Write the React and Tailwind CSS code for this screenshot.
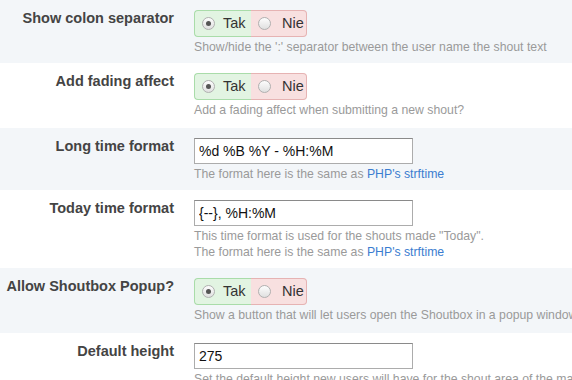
import React from 'react';

const rows = [
  {
    label: 'Show colon separator',
    type: 'toggle',
    help: ["Show/hide the ':' separator between the user name the shout text"],
  },
  {
    label: 'Add fading affect',
    type: 'toggle',
    help: ['Add a fading affect when submitting a new shout?'],
  },
  {
    label: 'Long time format',
    type: 'input',
    value: '%d %B %Y - %H:%M',
    help: [['The format here is the same as ', "PHP's strftime"]],
  },
  {
    label: 'Today time format',
    type: 'input',
    value: '{--}, %H:%M',
    help: ['This time format is used for the shouts made "Today".', ['The format here is the same as ', "PHP's strftime"]],
  },
  {
    label: 'Allow Shoutbox Popup?',
    type: 'toggle',
    help: ['Show a button that will let users open the Shoutbox in a popup window'],
  },
  {
    label: 'Default height',
    type: 'input',
    value: '275',
    help: ['Set the default height new users will have for the shout area of the main shoutbox'],
  },
];

function Radio({ checked }) {
  return (
    <span className="relative inline-flex h-[13px] w-[13px] shrink-0 items-center justify-center rounded-full border border-[#b0b0b0] bg-gradient-to-b from-[#fdfdfd] to-[#e0e0e0]">
      {checked && <span className="h-[5px] w-[5px] rounded-full bg-[#555]" />}
    </span>
  );
}

function Toggle() {
  return (
    <div className="flex h-[27px] w-[113px] text-[14.5px] text-[#333]">
      <label className="flex w-[57px] items-center rounded-l-[4px] border border-r-0 border-[#a9dca9] bg-[#e2f4e2] pl-[7px]">
        <Radio checked />
        <span className="ml-[8px]">Tak</span>
      </label>
      <label className="flex w-[56px] items-center rounded-r-[4px] border border-l-0 border-[#e6b3b3] bg-[#f8e0e0] pl-[7px]">
        <Radio />
        <span className="ml-[11px]">Nie</span>
      </label>
    </div>
  );
}

function HelpLine({ line }) {
  if (Array.isArray(line)) {
    return (
      <div>
        {line[0]}
        <a className="text-[#3b7dd0]">{line[1]}</a>
      </div>
    );
  }
  return <div>{line}</div>;
}

export default function App() {
  return (
    <div className="h-[380px] w-[572px] overflow-hidden bg-white font-['Liberation_Sans',Arial,sans-serif]">
      {rows.map((row, i) => (
        <div
          key={row.label}
          className={`flex pt-[10px] ${i === 0 ? 'pb-[8px]' : row.type === 'toggle' ? 'pb-[10px]' : 'pb-[8px]'} ${i % 2 === 0 ? 'bg-[#f3f6f9]' : 'bg-white'}`}
        >
          <div className="w-[174px] shrink-0 whitespace-nowrap text-right text-[14.5px] leading-[17px] font-bold text-[#444]">
            {row.label}
          </div>
          <div className="ml-[20px] min-w-0 whitespace-nowrap">
            {row.type === 'toggle' ? (
              <Toggle />
            ) : (
              <input
                readOnly
                value={row.value}
                className="block h-[26px] w-[219px] border border-[#acacac] border-t-[#8a8a8a] bg-white pr-[3px] pl-[4px] text-[14px] text-[#111] outline-none"
              />
            )}
            <div className="mt-[2px] text-[12.25px] leading-[16px] text-[#9a9a9a]">
              {row.help.map((line, j) => (
                <HelpLine key={j} line={line} />
              ))}
            </div>
          </div>
        </div>
      ))}
    </div>
  );
}
